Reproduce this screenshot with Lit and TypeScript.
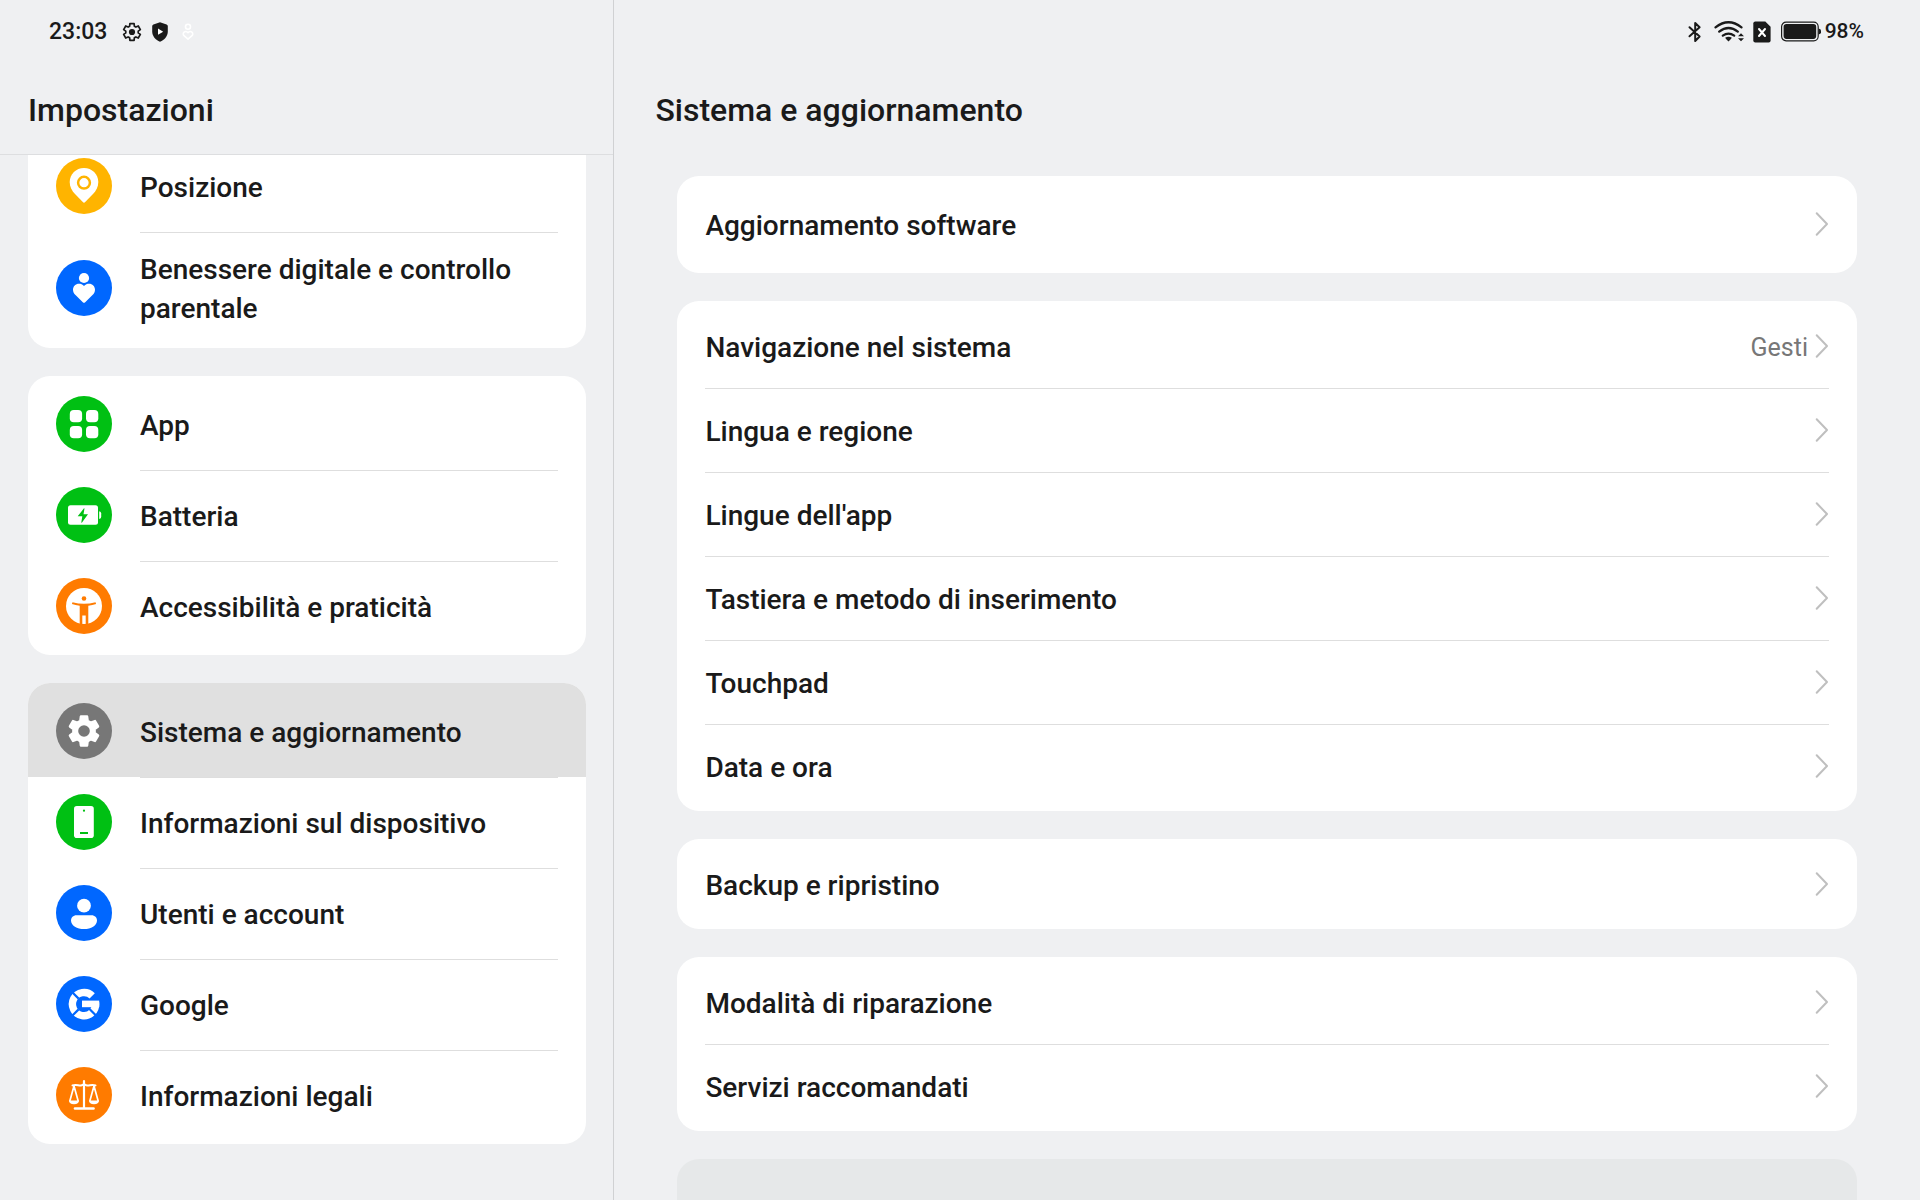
import { LitElement, html, svg, css, nothing } from "lit";
import type { TemplateResult } from "lit";
import { customElement, property, state } from "lit/decorators.js";
import { classMap } from "lit/directives/class-map.js";

type SvgPart = ReturnType<typeof svg>;

interface NavItem {
  label: string;
  color: string;
  icon: SvgPart;
}

interface SettingItem {
  label: string;
  value?: string;
}

interface SettingGroup {
  roomy?: boolean;
  items: SettingItem[];
}

/** Outline of a six-toothed gear centred on (cx, cy). */
function gearPath(cx: number, cy: number, tip: number, valley: number, tipHalf: number, rootHalf: number): string {
  const at = (r: number, deg: number) => {
    const a = (deg * Math.PI) / 180;
    return `${(cx + r * Math.cos(a)).toFixed(2)} ${(cy + r * Math.sin(a)).toFixed(2)}`;
  };
  const parts: string[] = [];
  for (let k = 0; k < 6; k++) {
    const mid = -90 + k * 60;
    parts.push(`${k ? "L" : "M"}${at(valley, mid - rootHalf)}`);
    parts.push(`L${at(tip, mid - tipHalf)}`, `L${at(tip, mid + tipHalf)}`);
    parts.push(`L${at(valley, mid + rootHalf)}`);
  }
  return parts.join("") + "Z";
}

const BLUE = "#0067ff";
const GREEN = "#00c013";
const ORANGE = "#ff7b00";
const AMBER = "#ffb400";
const GREY = "#777777";

const NAV: NavItem[][] = [
  [
    {
      label: "Posizione",
      color: AMBER,
      icon: svg`
        <path fill="#fff" d="M28 10C20 10 13.7 16.300 13.700 24C13.700 29 15.800 32.600 19 36L26.800 44.100Q28 45.300 29.200 44.100L37 36C40.200 32.600 42.300 29 42.300 24C42.300 16.300 36 10 28 10Z"/>
        <circle cx="28" cy="24.700" r="5.900" fill="none" stroke=${AMBER} stroke-width="2.500"/>`,
    },
    {
      label: "Benessere digitale e controllo parentale",
      color: BLUE,
      icon: svg`
        <circle cx="28" cy="18" r="5.100" fill="#fff"/>
        <path fill="#fff" d="M28 26C26.500 24.300 24.800 23.700 23 23.700C19.600 23.700 17 26.300 17 29.700C17 32 18 33.600 19.500 35.100L26.800 42.200Q28 43.300 29.200 42.200L36.500 35.100C38 33.600 39 32 39 29.700C39 26.300 36.400 23.700 33 23.700C31.200 23.700 29.500 24.300 28 26Z"/>`,
    },
  ],
  [
    {
      label: "App",
      color: GREEN,
      icon: svg`<g fill="#fff">
        <rect x="13.800" y="14" width="12.300" height="12.300" rx="4"/>
        <rect x="30" y="14" width="12.300" height="12.300" rx="4"/>
        <rect x="13.800" y="30" width="12.300" height="12.300" rx="4"/>
        <rect x="30" y="30" width="12.300" height="12.300" rx="4"/></g>`,
    },
    {
      label: "Batteria",
      color: GREEN,
      icon: svg`
        <rect x="12" y="18.300" width="30" height="19.500" rx="2.500" fill="#fff"/>
        <path fill="#fff" d="M43.200 24.300Q45.200 24.600 45.200 26.500V29.800Q45.200 31.700 43.200 32Z"/>
        <path fill=${GREEN} d="M28 21.200L21.700 29.200H26.300L25.300 35.500Q25.500 36 26 35.400L32 27.200H27.500L28.500 21.400Z"/>`,
    },
    {
      label: "Accessibilità e praticità",
      color: ORANGE,
      icon: svg`
        <circle cx="28" cy="28" r="18" fill="#fff"/>
        <circle cx="28" cy="20.500" r="2.300" fill=${ORANGE}/>
        <path fill=${ORANGE} d="M16.500 24.200Q28 27.200 39.500 24.200L40.100 26Q36.500 27.100 32.300 27.700V46.600H29.700V37.400H26.300V46.600H23.700V27.700Q19.500 27.100 15.900 26Z"/>`,
    },
  ],
  [
    {
      label: "Sistema e aggiornamento",
      color: GREY,
      icon: svg`
        <path fill="#fff" stroke="#fff" stroke-width="2.400" stroke-linejoin="round" d=${gearPath(28, 28, 14.8, 10.8, 12, 20)}/>
        <circle cx="28" cy="28" r="5.800" fill=${GREY}/>`,
    },
    {
      label: "Informazioni sul dispositivo",
      color: GREEN,
      icon: svg`
        <rect x="18" y="12" width="19.800" height="32" rx="2.800" fill="#fff"/>
        <circle cx="28" cy="16.700" r="1.100" fill=${GREEN}/>
        <rect x="24" y="38" width="8" height="2" fill=${GREEN}/>`,
    },
    {
      label: "Utenti e account",
      color: BLUE,
      icon: svg`
        <circle cx="28" cy="20.700" r="6.900" fill="#fff"/>
        <path fill="#fff" d="M20.500 30.200H35.500C38.800 30.200 41 32.600 41 35.400C41 40.500 35 44 28 44S15 40.500 15 35.400C15 32.600 17.200 30.200 20.500 30.200Z"/>`,
    },
    {
      label: "Google",
      color: BLUE,
      icon: svg`
        <path fill="none" stroke="#fff" stroke-width="7.400" d="M36.200 19.900A11.600 11.600 0 1 0 39.500 26.500"/>
        <path fill=${BLUE} d="M36 22L44.500 12V24.500H36Z"/>
        <path fill="#fff" d="M26 24.600H43.200V31.200H26Z"/>
        <path fill="none" stroke=${BLUE} stroke-width="2.200" d="M22.600 22.600L16 16M22.600 33.400L16 40M33 32.500L40 39.500"/>`,
    },
    {
      label: "Informazioni legali",
      color: ORANGE,
      icon: svg`
        <g fill="none" stroke="#fff" stroke-linecap="round" stroke-linejoin="round">
          <path stroke-width="2.200" d="M28 14V41"/>
          <path stroke-width="2" d="M16.500 18.400C20.500 16.900 22.500 18.900 25 18.400Q27 18 28 17Q29 18 31 18.400C33.500 18.900 35.500 16.900 39.500 18.400"/>
          <path stroke-width="1.700" d="M18 19L13.900 33.800M18 19L22.100 33.800M38 19L33.900 33.800M38 19L42.100 33.800"/>
          <path stroke-width="2.600" d="M19 41.500H37.500"/>
        </g>
        <path fill="#fff" d="M13 33.500H23Q22.800 37.300 18 37.300T13 33.500ZM33 33.500H43Q42.800 37.300 38 37.300T33 33.500Z"/>`,
    },
  ],
];

const SETTINGS: SettingGroup[] = [
  { roomy: true, items: [{ label: "Aggiornamento software" }] },
  {
    items: [
      { label: "Navigazione nel sistema", value: "Gesti" },
      { label: "Lingua e regione" },
      { label: "Lingue dell'app" },
      { label: "Tastiera e metodo di inserimento" },
      { label: "Touchpad" },
      { label: "Data e ora" },
    ],
  },
  { items: [{ label: "Backup e ripristino" }] },
  { items: [{ label: "Modalità di riparazione" }, { label: "Servizi raccomandati" }] },
];

@customElement("nav-row")
export class NavRow extends LitElement {
  @property({ attribute: false }) item!: NavItem;
  @property({ type: Boolean }) selected = false;
  @property({ type: Boolean }) first = false;
  @property({ type: Boolean }) last = false;

  static styles = css`
    :host {
      display: block;
    }
    .row {
      display: flex;
      gap: 28px;
      align-items: center;
      padding: 0 28px;
      color: #1a1a1a;
      text-decoration: none;
    }
    .first {
      padding-top: 3px;
    }
    .last {
      padding-bottom: 3px;
    }
    .selected {
      background: #e0e0e0;
    }
    .icon {
      flex: none;
      width: 56px;
      height: 56px;
      padding-bottom: 1px;
    }
    .label {
      flex: 1;
      display: flex;
      align-items: center;
      min-height: 56px;
      padding: 17px 0;
      border-top: 1px solid #dedede;
      font-size: 28px;
      line-height: 39px;
      font-weight: 500;
    }
    .first .label {
      border-top-color: transparent;
    }
  `;

  render() {
    const classes = { row: true, first: this.first, last: this.last, selected: this.selected };
    return html`<a class=${classMap(classes)} href="#" aria-current=${this.selected ? "page" : nothing}>
      <svg class="icon" viewBox="0 0 56 56" aria-hidden="true">
        <circle cx="28" cy="28" r="28" fill=${this.item.color} />
        ${this.item.icon}
      </svg>
      <span class="label">${this.item.label}</span>
    </a>`;
  }
}

@customElement("setting-row")
export class SettingRow extends LitElement {
  @property({ attribute: false }) item!: SettingItem;
  @property({ type: Boolean }) roomy = false;
  @property({ type: Boolean }) first = false;

  static styles = css`
    :host {
      display: block;
      padding: 0 28px;
    }
    .row {
      display: flex;
      align-items: center;
      min-height: 82px;
      padding-top: 1px;
      border-top: 1px solid #dedede;
      color: #1a1a1a;
      text-decoration: none;
      font-size: 28px;
      line-height: 39px;
      font-weight: 500;
    }
    .roomy {
      min-height: 90px;
      padding-top: 0;
    }
    .first {
      border-top-color: transparent;
    }
    .label {
      flex: 1;
    }
    .value {
      color: #777777;
      font-size: 25px;
      font-weight: 400;
    }
    .chevron {
      flex: none;
      width: 21px;
      height: 28px;
      padding-bottom: 2px;
    }
  `;

  render() {
    const classes = { row: true, roomy: this.roomy, first: this.first };
    return html`<a class=${classMap(classes)} href="#">
      <span class="label">${this.item.label}</span>
      ${this.item.value ? html`<span class="value">${this.item.value}</span>` : nothing}
      <svg class="chevron" viewBox="0 0 21 28" aria-hidden="true">
        <path
          d="M8.700 3.300L19 14L8.700 24.700"
          fill="none"
          stroke="#bfbfbf"
          stroke-width="2"
          stroke-linecap="round"
          stroke-linejoin="round"
        />
      </svg>
    </a>`;
  }
}

@customElement("app-root")
export class AppRoot extends LitElement {
  @state() private current = "Sistema e aggiornamento";

  static styles = css`
    :host {
      display: block;
      font-family: Roboto, "Liberation Sans", sans-serif;
      color: #1a1a1a;
    }
    .screen {
      display: grid;
      grid-template-columns: 32% 1fr;
      height: 100vh;
      overflow: hidden;
      background: #eff0f2;
    }
    .sidebar,
    .content {
      display: flex;
      flex-direction: column;
      min-width: 0;
      min-height: 0;
    }
    .sidebar {
      border-right: 1px solid #d0d1d3;
    }
    .status {
      display: flex;
      align-items: center;
      height: 62px;
      font-weight: 500;
    }
    .status-left {
      gap: 15px;
      padding-left: 49px;
      font-size: 23px;
    }
    .status-right {
      justify-content: flex-end;
      gap: 9px;
      padding-right: 56px;
      font-size: 21px;
    }
    .charge {
      display: flex;
      align-items: center;
      gap: 4px;
    }
    .glyphs {
      display: flex;
      gap: 8px;
    }
    .glyph {
      display: block;
      height: 24px;
    }
    .title {
      margin: 0;
      padding: 28px 28px 24px;
      font-size: 32px;
      line-height: 40px;
      font-weight: 500;
    }
    .sidebar .title {
      border-bottom: 1px solid #dddee0;
    }
    .content .title {
      padding: 28px 41px 46px;
    }
    .nav {
      flex: 1;
      min-height: 0;
      overflow: hidden;
      display: flex;
      flex-direction: column;
      gap: 28px;
      padding: 0 27px 0 28px;
    }
    .card {
      flex: none;
      overflow: hidden;
      margin: 0;
      padding: 0;
      list-style: none;
      border-radius: 22px;
      background: #ffffff;
    }
    .scrolled {
      margin-top: -17px;
      border-radius: 0 0 22px 22px;
    }
    .settings {
      flex: 1;
      min-height: 0;
      overflow: hidden;
      display: flex;
      flex-direction: column;
      gap: 28px;
      padding: 0 63px;
    }
    .settings .card {
      padding: 3px 0;
    }
    .settings .hint {
      min-height: 120px;
      background: #e6e8e9;
    }
  `;

  private navGroup(group: NavItem[], index: number): TemplateResult {
    return html`<ul class=${classMap({ card: true, scrolled: index === 0 })}>
      ${group.map(
        (item, i) => html`<li>
          <nav-row
            .item=${item}
            ?selected=${item.label === this.current}
            ?first=${i === 0}
            ?last=${i === group.length - 1}
            @click=${(e: Event) => {
              e.preventDefault();
              this.current = item.label;
            }}
          ></nav-row>
        </li>`
      )}
    </ul>`;
  }

  private settingGroup(group: SettingGroup): TemplateResult {
    return html`<ul class="card">
      ${group.items.map(
        (item, i) => html`<li>
          <setting-row .item=${item} ?roomy=${group.roomy ?? false} ?first=${i === 0}></setting-row>
        </li>`
      )}
    </ul>`;
  }

  private statusLeft(): TemplateResult {
    return html`<div class="status status-left">
      <time>23:03</time>
      <span class="glyphs">
        <svg class="glyph" width="20" height="24" viewBox="0 0 20 24" aria-hidden="true">
          <path
            d=${gearPath(10, 13, 8.7, 6.3, 14, 22)}
            fill="none"
            stroke="#1a1a1a"
            stroke-width="1.700"
            stroke-linejoin="round"
          />
          <circle cx="10" cy="13" r="3.100" fill="#1a1a1a" />
        </svg>
        <svg class="glyph" width="20" height="24" viewBox="0 0 20 24" aria-hidden="true">
          <path
            fill="#1a1a1a"
            d="M10 3.300L16.600 5.400Q17.800 5.900 17.800 7.100V12.500C17.800 17.300 14.500 20.800 10 22.700C5.500 20.800 2.200 17.300 2.200 12.500V7.100Q2.200 5.900 3.400 5.400Z"
          />
          <path fill="#fff" d="M8 9.600L13.200 12.700L8 15.800Z" />
        </svg>
        <svg class="glyph" width="20" height="24" viewBox="0 0 20 24" aria-hidden="true">
          <g fill="none" stroke="#fff" stroke-width="1.600" stroke-linejoin="round">
            <circle cx="10" cy="7.800" r="2.500" />
            <path
              d="M10 13.700C8.700 12.400 7.200 12.200 6.100 13.200C5 14.200 5 15.700 6 16.700L10 20.100L14 16.700C15 15.700 15 14.200 13.900 13.200C12.800 12.200 11.300 12.400 10 13.700Z"
            />
          </g>
        </svg>
      </span>
    </div>`;
  }

  private statusRight(): TemplateResult {
    return html`<div class="status status-right">
      <svg class="glyph" width="19" height="24" viewBox="0 0 19 24" aria-hidden="true">
        <path
          fill="none"
          stroke="#1a1a1a"
          stroke-width="2"
          stroke-linejoin="round"
          stroke-linecap="round"
          d="M3.500 8.200L13.600 17.500L9.200 22V4L13.600 8.300L3.500 17.300"
        />
      </svg>
      <svg class="glyph" width="30" height="24" viewBox="0 0 30 24" aria-hidden="true">
        <g fill="none" stroke="#1a1a1a" stroke-width="2.300" stroke-linecap="round">
          <path d="M1.500 8.300Q14.500 -1.900 27.500 8.300" />
          <path d="M5.200 12.600Q14.500 5.400 23.800 12.600" />
          <path d="M8.800 16.600Q14.500 12.600 20.200 16.600" />
        </g>
        <g fill="#1a1a1a">
          <path d="M11.100 18.800Q14.500 16.600 17.900 18.800Q17.200 20.200 14.500 22.400Q11.800 20.200 11.100 18.800Z" />
          <path d="M24 17.200L27 14.200L30 17.200ZM24 19.200H30L27 22.200Z" />
        </g>
      </svg>
      <svg class="glyph" width="18" height="24" viewBox="0 0 18 24" aria-hidden="true">
        <path
          fill="#1a1a1a"
          d="M2.300 2.500H12.300L17.600 7.800V21.500Q17.600 23.500 15.600 23.500H2.300Q0.300 23.500 0.300 21.500V4.500Q0.300 2.500 2.300 2.500Z"
        />
        <path stroke="#fff" stroke-width="2" stroke-linecap="round" d="M6 10L12 17M12 10L6 17" />
      </svg>
      <span class="charge">
        <svg class="glyph" width="41" height="24" viewBox="0 0 41 24" aria-hidden="true">
          <rect x="1.600" y="3.200" width="36.600" height="18.600" rx="4.500" fill="none" stroke="#1a1a1a" stroke-width="1.200" />
          <rect x="3.600" y="5.100" width="32.600" height="14.800" rx="2.800" fill="#1a1a1a" />
          <path fill="#1a1a1a" d="M38.500 9.500Q41 9.800 41 11.500V13.500Q41 15.200 38.500 15.500Z" />
        </svg>
        <span>98%</span>
      </span>
    </div>`;
  }

  render() {
    return html`<div class="screen">
      <aside class="sidebar">
        ${this.statusLeft()}
        <h1 class="title">Impostazioni</h1>
        <nav class="nav">${NAV.map((group, i) => this.navGroup(group, i))}</nav>
      </aside>
      <main class="content">
        ${this.statusRight()}
        <h2 class="title">Sistema e aggiornamento</h2>
        <div class="settings">
          ${SETTINGS.map((group) => this.settingGroup(group))}
          <section class="card hint"></section>
        </div>
      </main>
    </div>`;
  }
}
